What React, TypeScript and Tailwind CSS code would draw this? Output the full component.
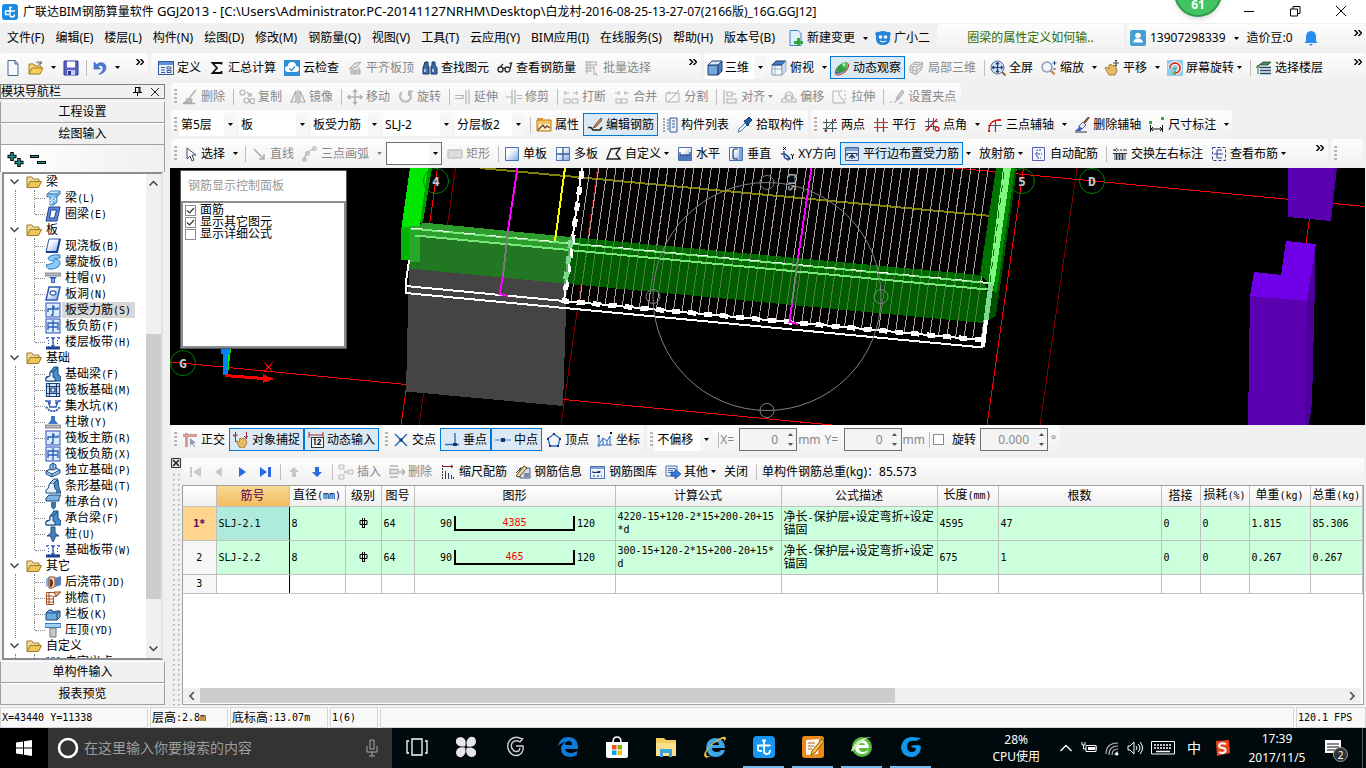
import { useState } from "react";
import type { ReactNode } from "react";
import clsx from "clsx";

// 16x16 icon bodies
const icons: Record<string, ReactNode> = {
  app: (
    <>
      <rect width="16" height="16" rx="3" fill="#1b8ae0" />
      <path d="M7 3.500h3M8 3.500v7.500q0 2 2 2 2.500 0 2.500-2.500M13 7H3.500v3.500H7" fill="none" stroke="#fff" strokeWidth="1.400" />
    </>
  ),
  newDoc: <path d="M3 .5h7l3 3.500v11.500h-10z M10 .5v3.500h3" fill="#f7fbff" stroke="#49648f" />,
  folderOpen: (
    <>
      <path d="M1 14V4h5l1 2h6v3" fill="#f4d77b" stroke="#a27a1f" />
      <path d="M1 14l3-6h11l-3 6z" fill="#f8cf58" stroke="#a27a1f" />
      <path d="M8 3q3-3 5 1m0-3v3h-3" fill="none" stroke="#555" />
    </>
  ),
  save: (
    <>
      <path d="M1 1h14v14H1z" fill="#5b66c4" stroke="#2f3b93" />
      <path d="M4 1.500h8v6H4z" fill="#fff" />
      <path d="M4 10h8v5H4z" fill="#c8cdee" />
      <path d="M5 11h3v4H5z" fill="#2f3b93" />
    </>
  ),
  undo: (
    <path d="M2 2v7h6.500L6 6.500c2-2 5-1 5 2 0 2.500-2 4-4 6 4-1 7-3.500 7-7 0-5-6-6-9.500-3z" fill="#4a7ddb" stroke="#2c57ad" strokeWidth=".6" />
  ),
  define: (
    <>
      <rect x=".5" y="1.500" width="15" height="13" fill="#e9f1fb" stroke="#33589b" />
      <path d="M1 2h14v3H1z" fill="#5f8fd4" />
      <path d="M3 7.500h4M3 10h4M3 12.500h4" stroke="#33589b" />
      <path d="M9 7h4v2H9zM9 10.500h4v2H9z" fill="#fff" stroke="#33589b" />
    </>
  ),
  sigma: <path d="M12.500 4.500V3h-9l4.500 5-4.500 5h9v-2" fill="none" stroke="#111" strokeWidth="1.800" />,
  cloud: (
    <>
      <rect width="16" height="16" fill="#2d8fd6" />
      <path d="M4 12a3 3 0 0 1 0-6 4 4 0 0 1 8 0 3 3 0 0 1 0 6z" fill="#fff" />
      <path d="M5.500 8.500l2 2 3.500-4" fill="none" stroke="#2d8fd6" strokeWidth="1.300" />
    </>
  ),
  slabTop: <path d="M2 9l6-6 6-1-4 5zM4 10h9v4H4zM4 12h9M8 10v4M12 7v4" fill="#ddd" stroke="#aaa" />,
  binoculars: (
    <>
      <path d="M3 2h3v3l1 2v7H1V8zM10 2h3v3l2 3v6H9V7l1-2z" fill="#3a6aa5" stroke="#173a68" />
      <path d="M3 9v3M11 9v3" stroke="#cfe2f8" strokeWidth="1.500" />
    </>
  ),
  glasses: (
    <path d="M1 9.500a2.500 2.500 0 1 0 5 0 2.500 2.500 0 1 0-5 0M8 9.500a2.500 2.500 0 1 0 5 0 2.500 2.500 0 1 0-5 0M6 9q1-1.500 2 0M13 9l1.500-6-2 .500M3 7l3-3" fill="none" stroke="#333" strokeWidth="1.400" />
  ),
  batch: <path d="M1 2h10M1 5h12M1 8h9M1 11h7M3 1v13M6 1v10M10 6v9l2-2 1 3M12 1v4" fill="none" stroke="#aaa" />,
  cube: (
    <>
      <path d="M1 5h10v10H1z" fill="#74a7dc" stroke="#1e3f6e" />
      <path d="M1 5l4-4h10l-4 4z" fill="#d5e7fa" stroke="#1e3f6e" />
      <path d="M11 5l4-4v10l-4 4z" fill="#4a7fbd" stroke="#1e3f6e" />
    </>
  ),
  topView: (
    <>
      <path d="M1 5h10v10H1z" fill="#f5f9ff" stroke="#7f93ad" />
      <path d="M1 5l4-4h10l-4 4z" fill="#3f7cc6" stroke="#1e3f6e" />
      <path d="M11 5l4-4v10l-4 4zM4 5v10M1 9h10" fill="#cbdcf0" stroke="#7f93ad" strokeWidth=".7" />
    </>
  ),
  orbit: (
    <>
      <ellipse cx="8" cy="9" rx="8" ry="4" transform="rotate(-40 8 9)" fill="none" stroke="#c03030" />
      <ellipse cx="8" cy="8" rx="6.500" ry="4" transform="rotate(-40 8 8)" fill="#2f9e3f" />
      <circle cx="11" cy="5" r="3" fill="#57bf62" />
      <circle cx="10" cy="4.500" r="1.300" fill="#c9f3cc" />
      <path d="M2 12q2 2 5 0" fill="none" stroke="#3a62a8" strokeWidth="1.500" />
    </>
  ),
  localCube: <path d="M1 6l5-4 8 1-2 7-5 5-6-3zM1 6l7 1 6-4M8 7l-1 8M4 4l7 1M4 6.500v7M1 9l7 2 5-5" fill="#e4e4e4" stroke="#aaa" />,
  fullScreen: (
    <>
      <path d="M11.500 11.500l4 4" stroke="#8a6a3a" strokeWidth="2" />
      <circle cx="7.500" cy="7.500" r="6.500" fill="#cfe0f4" stroke="#5c7196" />
      <path d="M7.500 2.500v10M2.500 7.500h10M6 4l1.500-1.500L9 4M6 11l1.500 1.500L9 11M4 6L2.500 7.500 4 9M11 6l1.500 1.500L11 9" fill="none" stroke="#1c3f78" strokeWidth="1.200" />
    </>
  ),
  zoom: (
    <>
      <path d="M9.500 10l4 4.500" stroke="#c79447" strokeWidth="2.500" />
      <circle cx="6" cy="7" r="5" fill="#eef4fb" stroke="#8c9bb2" strokeWidth="1.500" />
      <path d="M13.500 1v4M11.500 3h4M12 9h3" stroke="#24508f" />
    </>
  ),
  pan: (
    <>
      <path d="M1 8l2-1 2 2V5l2-1 1 2 2-1 2 2 1 4-2 4H5z" fill="#e7bb63" stroke="#9c6f22" strokeWidth=".8" />
      <path d="M12 0v6M9 3h6M11 1l1-1 1 1M11 5l1 1 1-1" fill="none" stroke="#333" strokeWidth=".9" />
    </>
  ),
  screenRotate: (
    <>
      <rect width="16" height="16" fill="#8ecbe8" />
      <path d="M3 8a5 5 0 1 1 5 5" fill="none" stroke="#fff" strokeWidth="4" />
      <path d="M3 8a5 5 0 1 1 5 5" fill="none" stroke="#d13a2f" strokeWidth="2" />
      <path d="M5 14l4-4v5zM5 8h5l-2 2z" fill="#62a845" />
    </>
  ),
  floors: (
    <>
      <path d="M3 5l4-3h8l-3 3z" fill="#4a8a62" stroke="#1d4b30" strokeWidth=".8" />
      <path d="M4 7.500h11M4 10.500h11M4 13.500h11" stroke="#26496f" strokeWidth="1.500" />
      <path d="M2 5v9M0 8l2-3 2 3" fill="none" stroke="#26702f" />
    </>
  ),
  brushGray: <path d="M14 1l-6 7M1 14q3 0 4-4l3-1 2 2-1 3zM1 14.500h12" fill="#bbb" stroke="#aaa" strokeWidth="1.300" />,
  copyGray: <path d="M1 3.500a2.500 2.500 0 1 0 5 0 2.500 2.500 0 1 0-5 0M5 11.500a2.500 2.500 0 1 0 5 0 2.500 2.500 0 1 0-5 0M11 12a2.500 2.500 0 1 0 5 0 2.500 2.500 0 1 0-5 0M8 3l4 4M12 4v3H9" fill="none" stroke="#b2b2b2" strokeWidth="1.200" />,
  mirrorGray: <path d="M6 2v11H1zM10 2v11h5zM8 1v14" fill="none" stroke="#a9a9a9" strokeWidth="1.200" />,
  moveGray: <path d="M8 1v14M1 8h14M6 3l2-2 2 2M6 13l2 2 2-2M3 6L1 8l2 2M13 6l2 2-2 2" fill="none" stroke="#b2b2b2" strokeWidth="1.600" />,
  rotateGray: <path d="M4 3a5.500 5.500 0 1 0 7 0M11 7V2.500h4" fill="none" stroke="#bcbcbc" strokeWidth="2.200" />,
  extendGray: <path d="M0 6.500h8v3H0M11 1v14M14 1v14" fill="none" stroke="#b2b2b2" strokeWidth="1.200" />,
  trimGray: <path d="M0 8h7M6 1v14M9 1v14M11 6.500h5M11 9.500h5" fill="none" stroke="#b2b2b2" strokeWidth="1.200" />,
  breakGray: <path d="M1 4h5M10 4h5M3 2L1 4l2 2M13 2l2 2-2 2M1 10h6v4H1zM9 10h6v4H9z" fill="none" stroke="#b2b2b2" />,
  mergeGray: <path d="M1 4h5M10 4h5M4 2l2 2-2 2M12 2l-2 2 2 2M2 10h5v4H2zM7 10h6v4H7z" fill="none" stroke="#b2b2b2" />,
  splitGray: <path d="M1 4h13v9H1zM3 13l9-9M14 1l-5 6M4 2v3" fill="none" stroke="#b2b2b2" />,
  alignGray: <path d="M2 1v14M5 3h5v4H5zM5 10h9v4H5zM11 5h3" fill="none" stroke="#b2b2b2" strokeWidth="1.200" />,
  offsetGray: <path d="M1 13q-1-3 3-4 0-6 4-6t4 6q4 1 3 4zM5 11q0-5 3-5t3 5z" fill="none" stroke="#b2b2b2" strokeWidth="1.200" />,
  stretchGray: (
    <>
      <path d="M1 2h6v4l6 8H1z" fill="none" stroke="#b2b2b2" />
      <path d="M8 2h5v12" fill="none" stroke="#b2b2b2" strokeDasharray="2 2" />
    </>
  ),
  gripGray: <path d="M1 13h2M5 13h2M13 1L8 8l2 2 5-7zM8 8l-1 4 3-2M10 14h4" fill="#ccc" stroke="#aaa" />,
  props: (
    <>
      <path d="M1 3h14v11H1z" fill="#f7c765" stroke="#b57a1b" />
      <path d="M1 1h6v3H1z" fill="#e1902f" />
      <path d="M3 7h11v6H3z" fill="#fdf3d8" />
      <path d="M2 13l5-5 2 3 2-2 3 2" fill="none" stroke="#6b4a1c" strokeWidth="1.400" />
    </>
  ),
  editBar: (
    <>
      <path d="M1 10.500h3l2 2.500h7l2-3" fill="none" stroke="#222" strokeWidth="1.600" />
      <path d="M14 1L8 8l-2 3 3-1 6-7z" fill="#c9875a" stroke="#5b3314" strokeWidth=".7" />
    </>
  ),
  compList: (
    <>
      <path d="M1 2h3M1 5h3M1 8h3M1 11h3M1 14h3M6 2v12" stroke="#3b5a92" strokeDasharray="2 1" />
      <path d="M8 1h7v14H8z" fill="#e9f1fb" stroke="#3b5a92" />
      <path d="M10 4h3M10 7h3M10 10h3" stroke="#3b5a92" />
    </>
  ),
  pick: (
    <>
      <path d="M1 15l1-3 6-6 2 2-6 6z" fill="#eaf2fb" stroke="#4d7fae" />
      <path d="M7 4l2-1 3-3 3 3-3 3-1 3z" fill="#1d5ea8" stroke="#12365f" />
    </>
  ),
  twoPoint: (
    <>
      <path d="M4.500 2v13M10.500 2v13M1 5.500h14M1 11.500h14" stroke="#4b5568" />
      <path d="M2 14L14 2" stroke="#2a8f3a" />
      <path d="M3 13h2v2H3zM12 2h2v2h-2z" fill="#c22" />
    </>
  ),
  parallel: (
    <>
      <path d="M4.500 1v14M10.500 1v14" stroke="#4b5568" strokeWidth="1.300" />
      <path d="M1 5.500h14M1 10.500h14" stroke="#b43c3c" />
    </>
  ),
  pointAngle: (
    <>
      <path d="M4.500 1v12M9.500 1v12M1 4.500h13M1 9.500h12" stroke="#4b5568" />
      <path d="M2 14L13 2" stroke="#d11c1c" strokeWidth="1.300" />
      <circle cx="13" cy="12" r="2" fill="none" stroke="#d11c1c" strokeWidth="1.300" />
    </>
  ),
  threeAxis: (
    <>
      <path d="M8.500 3v12M1 8.500h14" stroke="#4b5568" strokeWidth="1.200" />
      <path d="M2 14Q2 3 12 3" fill="none" stroke="#d11c1c" strokeWidth="1.300" />
      <path d="M11 2h3v2h-3zM1 13h2v2H1z" fill="#d11c1c" />
    </>
  ),
  delAxis: (
    <>
      <path d="M15 0l-5 6" stroke="#7b4a1d" strokeWidth="2" />
      <path d="M5 9l4-4 3 3-4 4z" fill="#e9e9f5" stroke="#5960a0" />
      <path d="M1 13q3 0 4-4l3 3q-1 3-6 2z" fill="#4060c0" />
      <path d="M1 15h12" stroke="#333" />
    </>
  ),
  dimension: (
    <>
      <path d="M1.500 8v7M13.500 8v7M2 12h11M4 10l-2 2 2 2M11 10l2 2-2 2" fill="none" stroke="#111" />
      <path d="M0 4h3v3H0zM12 0h3v3h-3z" fill="#3aa846" />
    </>
  ),
  cursor: <path d="M5 2v11l3-3 2 5 2-1-2-5h4z" fill="#fff" stroke="#3a4a66" />,
  lineGray: <path d="M3 3l9 9M13 8v5H8" fill="none" stroke="#aaa" strokeWidth="1.400" />,
  arcGray: <path d="M2 14Q3 5 12 3M1 12h3v3H1zM11 1h3v3h-3zM4 6h3v3H4z" fill="none" stroke="#aaa" />,
  rectGray: <path d="M1 4h14v8H1z" fill="#ddd" stroke="#b5b5b5" />,
  slab: <path d="M1.500 1.500h13v13h-13z" fill="url(#blueFade)" stroke="#4b71b0" />,
  slabs: (
    <>
      <path d="M1.500 1.500h13v13h-13z" fill="url(#blueFade)" stroke="#4b71b0" />
      <path d="M8 2v12M2 8h12" stroke="#3d5d94" strokeWidth="1.300" />
    </>
  ),
  custom: <path d="M5 3l9-1-4 6 4 5H1z" fill="none" stroke="#222" strokeWidth="1.400" />,
  horiz: (
    <>
      <path d="M1.500 1.500h13v13h-13z" fill="url(#blueFade)" stroke="#4b71b0" />
      <path d="M2 9h12v5H2z" fill="#4c78bb" />
      <path d="M3 6v3h10V6" fill="none" stroke="#1d3360" />
    </>
  ),
  vert: (
    <>
      <path d="M1.500 1.500h13v13h-13z" fill="url(#blueFade)" stroke="#4b71b0" />
      <path d="M10 3H7q-2 0-2 3v4q0 3 2 3h3" fill="none" stroke="#1d3360" strokeWidth="1.200" />
      <path d="M11 2h3v12h-3z" fill="#7fa2d6" />
    </>
  ),
  xy: (
    <>
      <path d="M5 5v4q0 4 4 4h2M2 8q5-1 7 3M9 10l2 3-3 1" fill="none" stroke="#2c4f93" strokeWidth="1.400" />
      <path d="M4 1l3 3M7 1L4 4M12 8l1.500 2L15 8M13.500 10v3" fill="none" stroke="#111" />
    </>
  ),
  edgeBar: (
    <>
      <path d="M1.500 1.500h13v13h-13z" fill="#d9e6f6" stroke="#3f5f97" />
      <path d="M2 2h12v3H2z" fill="#7f9fd0" />
      <path d="M3 10V7.500h10V10M8 8v5M5 12l3-3 3 3" fill="none" stroke="#1d3360" strokeWidth="1.200" />
    </>
  ),
  autoBar: (
    <>
      <path d="M1.500 1.500h12v13h-12z" fill="#f4f6ff" stroke="#5361b5" />
      <path d="M10 4H6v8h4M4 8h7" fill="none" stroke="#2b3f8f" strokeDasharray="2 1" />
    </>
  ),
  swap: (
    <>
      <path d="M2 5V2M2 4h12M14 5V2M5 2l-2 2 2 2" fill="none" stroke="#333" strokeDasharray="2 1" />
      <path d="M2 8h12v6H2z" fill="#9aa5b5" />
      <path d="M4.500 8v6M7.500 8v6M10.500 8v6M1 7.500h14" stroke="#2c3440" />
    </>
  ),
  viewBar: (
    <>
      <path d="M1.500 1.500h13v13h-13z" fill="none" stroke="#2b3f8f" strokeDasharray="3 2" />
      <path d="M11 4H6v8h5M3 8h9" fill="none" stroke="#2b3f8f" />
    </>
  ),
  ortho: (
    <>
      <path d="M1 3.500h14M4.500 1v14" stroke="#d99a9a" strokeWidth="3" />
      <path d="M8 6l6 5-3 .500 2 3-1 .500-2-3-2 2z" fill="#8d9db5" />
    </>
  ),
  snap: (
    <>
      <path d="M2.500 0v10M13.500 0v7M0 3h5M2 5l-2-2M11 4l2 2 2-2" fill="none" stroke="#a12a2a" />
      <path d="M3 9l3 1 1-4 2 1 2-1 2 2 1 3-3 5H7z" fill="#e7bb63" stroke="#9c6f22" strokeWidth=".8" />
    </>
  ),
  dynInput: (
    <>
      <path d="M1 0v6M15 0v6M1 3h14" stroke="#a12a2a" />
      <rect x="3.500" y="5.500" width="12" height="10" fill="#f3f3f3" stroke="#333" />
      <path d="M6 8l1-1v6M9.500 8.500q2.500-2 3 0 0 1-3 4h3.500" fill="none" stroke="#111" strokeWidth="1.200" />
    </>
  ),
  cross: (
    <>
      <path d="M2 2l12 12M14 2L2 14" stroke="#2a6fc0" strokeWidth="1.500" />
      <path d="M6.500 6.500h3v3h-3z" fill="#17366d" />
    </>
  ),
  perp: (
    <>
      <path d="M1 12.500h14M11 1v12" stroke="#2a6fc0" strokeWidth="1.400" />
      <path d="M9 11h4v3H9z" fill="#17366d" />
    </>
  ),
  mid: (
    <>
      <path d="M0 8h16" stroke="#6fa8dd" strokeWidth="1.500" />
      <path d="M6 6h4v4H6z" fill="#17366d" />
    </>
  ),
  vertex: (
    <>
      <path d="M8 2l6 4.500-2 7.500H4L2 6.500z" fill="none" stroke="#2a6fc0" strokeWidth="1.300" />
      <path d="M7 1h2v2H7zM1 6h2v2H1zM13 6h2v2h-2zM3 13h2v2H3zM11 13h2v2h-2z" fill="#17366d" />
    </>
  ),
  coord: (
    <>
      <path d="M2 3v12M0 13h15M3 11l3-5 4 3 3-5v9M6 6v7M10 9v4" fill="none" stroke="#2a6fc0" />
      <path d="M13 0l2 2M15 0l-2 2M0 4h3" stroke="#111" />
    </>
  ),
  insertGray: <path d="M1 1h5v4H1zM1 11h5v4H1zM10 6h5v4h-5zM6 8h4M8 6L6 8l2 2" fill="#eee" stroke="#bdbdbd" />,
  deleteGray: <path d="M1 2h8M1 5.500h8v4H1zM1 13h8M10 8h6M13 5l3 3-3 3" fill="#e6e6e6" stroke="#b2b2b2" strokeWidth="1.300" />,
  scaleBar: (
    <>
      <path d="M2.500 1v14" stroke="#333" strokeDasharray="2 1" />
      <path d="M2 2.500h11M11 1l2 1.500L11 4" fill="none" stroke="#8a1c1c" />
      <path d="M5.500 7v8M8.500 9v6M11.500 11v4M13.500 13v2" stroke="#2b3f6f" />
    </>
  ),
  barInfo: (
    <>
      <path d="M5 4h10v10H5z" fill="#cfe0f5" stroke="#3b5a92" />
      <path d="M1 12l8-10 3 2-8 9z" fill="#f0d79b" stroke="#5b4520" />
      <path d="M1 9l5-5M9 10h5M9 12h5" stroke="#333" />
    </>
  ),
  barLib: (
    <>
      <rect x=".5" y="2.500" width="14" height="12" fill="#eaf3fd" stroke="#4b71b0" />
      <path d="M1 3h13v2H1z" fill="#7ba3dc" />
      <path d="M3 9V7M3 8.500h7V7M3 12h2M7 12h2M11 12h1" stroke="#17366d" />
    </>
  ),
  other: (
    <>
      <path d="M1 2h11v10H1z" fill="#eaf3fd" stroke="#4b71b0" />
      <path d="M3 4.500h7M3 6.500h5M3 8.500h4" stroke="#4b71b0" />
      <path d="M6 8h4V5l6 5-6 5v-3H6z" fill="#3b76db" stroke="#1d4697" strokeWidth=".7" />
    </>
  ),
  change: (
    <>
      <path d="M2 .5h8l3 3v12H2z" fill="#e2effb" stroke="#3c86c6" />
      <path d="M9 8h3v3h3v3h-3v2H9v-2H6v-3h3z" fill="#35a53e" />
    </>
  ),
  mascot: (
    <>
      <path d="M0 4q1-3 4-2 4-2 8 0 3-1 4 2-1 1-1 2v4q-1 5-7 5t-7-5V6q0-1-1-2z" fill="#2687d9" />
      <circle cx="5.500" cy="7" r="1.800" fill="#fff" />
      <circle cx="10.500" cy="7" r="1.800" fill="#fff" />
      <path d="M5 11q3 2 6 0" fill="none" stroke="#fff" />
    </>
  ),
  user: (
    <>
      <rect width="16" height="16" rx="2" fill="#459fd3" />
      <circle cx="8" cy="5.500" r="2.800" fill="#fff" />
      <path d="M3 12.500q1-4 5-4t5 4z" fill="#fff" />
    </>
  ),
  bell: <path d="M8 1q5 0 5 6v4l1.500 2h-13L3 11V7q0-6 5-6zM6 14h4l-2 2z" fill="#2b8cf0" />,
  first: <path d="M2 3h2v10H2zM13 3v10L5 8z" fill="#c9c9c9" />,
  prev: <path d="M11 3v10L4 8z" fill="#c9c9c9" />,
  next: <path d="M5 3v10l7-5z" fill="#2d6be0" />,
  last: <path d="M3 3v10l7-5zM11 3h3v10h-3z" fill="#2d6be0" />,
  up: <path d="M8 3l5 5h-3v5H6V8H3z" fill="#c9c9c9" />,
  down: <path d="M8 13l5-5h-3V3H6v5H3z" fill="#2d6be0" />,
  // tree
  folder: (
    <>
      <path d="M1 13V3h5l1 2h6v3" fill="#f3dc97" stroke="#9a7a31" />
      <path d="M1 13.500l3-6h11.500l-3 6z" fill="#edc455" stroke="#9a7a31" />
    </>
  ),
  beam: (
    <>
      <path d="M2 4l4-3h9l-3 3z" fill="#d2ebfb" stroke="#3e86c0" />
      <path d="M2 4h10v3H9v8H5V7H2zM12 4l3-3v3l-3 3v5l-3 3" fill="#8cc3ea" stroke="#3e86c0" />
      <path d="M5 11l4-4M5 14l4-4" stroke="#fff" />
    </>
  ),
  ring: <path d="M4 1h11l-3 14H1zM6 4h5.500l-2 8H4.500z" fillRule="evenodd" fill="#5b8ad8" stroke="#1d3f91" />,
  cast: (
    <>
      <path d="M4 1h11l-3 13H1z" fill="url(#blueFade)" stroke="#2c5bb5" />
      <path d="M1 14h11l3-13" fill="none" stroke="#173f91" strokeWidth="2" />
    </>
  ),
  spiral: <path d="M15 1q-10-1-12 3 0 3 6 3 1 2-8 4 1 5 6 4 8-1 8-6 0-4-6-4 0-1 6-1z" fill="#8cc9f5" stroke="#2c7cc5" />,
  cap: (
    <>
      <path d="M0 3h16v3H0z" fill="#b8bcc2" stroke="#666" strokeWidth=".7" />
      <path d="M4 7h8l-2 2v4H6V9z" fill="#2d63c0" />
      <path d="M7.500 9h1v3h-1z" fill="#fff" />
    </>
  ),
  hole: (
    <>
      <path d="M4 1h11l-3 13H1z" fill="url(#blueFade)" stroke="#2c5bb5" strokeWidth="1.500" />
      <ellipse cx="8" cy="7" rx="3" ry="2.200" fill="#fff" stroke="#2c5bb5" strokeWidth="1.200" />
    </>
  ),
  mainBar: (
    <>
      <rect x="1" y="1" width="14" height="14" fill="#dceaff" stroke="#2c4fb5" />
      <path d="M8 3v10h-2M3 10V7h10V5M10 5H7" fill="none" stroke="#2c5bb5" strokeWidth="1.300" />
    </>
  ),
  negBar: (
    <>
      <rect x="1" y="1" width="14" height="14" fill="#dceaff" stroke="#2c4fb5" />
      <path d="M8 2v12M3 8V5h10v3M3 12V9h10v3" fill="none" stroke="#2c5bb5" strokeWidth="1.300" />
    </>
  ),
  strip: (
    <>
      <path d="M1 14h14" stroke="#1d3f91" strokeWidth="3" />
      <path d="M1 4h2M13 4h2M6 4h4M8 4v9M6 12h4" stroke="#2c5bb5" strokeWidth="1.400" />
      <path d="M3.500 3v10M12.500 3v10" stroke="#2c5bb5" strokeDasharray="1 2" />
    </>
  ),
  footBeam: (
    <>
      <path d="M1 15v-4l4-1V6l4-5h4v7l3 3v4z" fill="#4a8ac6" stroke="#174a80" />
      <path d="M1 15v-3l4-2V6h3v5l2 1v3z" fill="#e6f1fc" stroke="#174a80" />
      <path d="M8 6l5-5" stroke="#174a80" />
    </>
  ),
  raft: <path d="M1.500 1.500h13v13h-13zM4.500 1v14M11.500 1v14M1 4.500h14M1 11.500h14M6 6h4v4H6z" fill="#dceaff" stroke="#173f7a" strokeWidth="1.200" />,
  pit: (
    <>
      <path d="M0 3h3l2 6h6l2-6h3M5 2v4M11 2v4" fill="none" stroke="#2c5bb5" strokeWidth="1.400" />
      <path d="M1 9l4 4h6l4-4" fill="none" stroke="#2c5bb5" strokeDasharray="2 1" strokeWidth="2" />
    </>
  ),
  pier: (
    <>
      <path d="M6 2h4v4l3 4H3l3-4z" fill="#3d74c8" />
      <path d="M0 11h16v3H0z" fill="#b8bcc2" stroke="#666" strokeWidth=".7" />
    </>
  ),
  footing: (
    <path d="M1 9l4-2V3l3-2 3 2v3l4 2v3l-8 4-6-3zM1 9l6 3 8-4M7 12v3M5 7l3 1 3-2M8 1v7" fill="#9ec9ec" stroke="#174a80" />
  ),
  stripFoot: (
    <>
      <path d="M9 2h4l1 8 2 5h-5L7 5z" fill="#4a8ac6" stroke="#174a80" />
      <path d="M1 15v-3q3-1 3-5l1-2h4q0 6 3 8v2z" fill="#e6f1fc" stroke="#174a80" />
      <path d="M5 5l4-4h4L9 5" fill="#9ec9ec" stroke="#174a80" />
    </>
  ),
  pileCap: (
    <>
      <path d="M1 4l3-3h12l-2 3v3H1z" fill="#7fb2e0" stroke="#174a80" />
      <path d="M6 8h5v5l-2.500 3L6 13z" fill="#3d74a8" />
    </>
  ),
  pile: <path d="M6 1h4v6l4 3h-4v2l-2 4-2-4v-2H2l4-3z" fill="#4a7fb0" stroke="#1d4f80" />,
  postCast: (
    <>
      <path d="M1 5l3-2v9l-3 1z" fill="#8fb0dd" />
      <path d="M4 3h6v9l-2 2H4z" fill="#e8ded4" stroke="#8a4b22" />
      <path d="M5 5q3 0 3 4t-3 4z" fill="#6b3414" />
      <path d="M10 4l6-2v9l-6 2z" fill="#5c7fb8" />
    </>
  ),
  eave: (
    <>
      <path d="M1.500 2.500h13l-3 4h-3v8h-7z" fill="#fff" stroke="#a54b22" />
      <path d="M1 6h7M1 9h7M1 12h7M4 3v12" stroke="#a54b22" />
      <path d="M9 2h7l-5 4z" fill="#d8c2a8" stroke="#a54b22" />
    </>
  ),
  rail: <path d="M1 7l3-3h3l1 2 3-1h4v6l-3 3H1zM1 7h11v7M12 7l3-2" fill="#6fa9d8" stroke="#174a80" />,
  coping: (
    <>
      <path d="M0 1.500h16v4H0z" fill="#9fd0f5" stroke="#2c7cc5" />
      <path d="M5 6h6v9H5z" fill="#c9c9c9" stroke="#777" />
    </>
  ),
};

function Icon({ name, className }: { name: string; className?: string }) {
  return (
    <svg viewBox="0 0 16 16" className={clsx("h-4 w-4 shrink-0", className)} aria-hidden="true">
      {icons[name]}
    </svg>
  );
}

function Caret({ className = "fill-black" }: { className?: string }) {
  return (
    <svg viewBox="0 0 5 3" className={clsx("h-[3px] w-[5px] shrink-0", className)} aria-hidden="true">
      <path d="M0 0h5L2.500 3z" />
    </svg>
  );
}

// Bitmap-style mixed text: CJK at 12px, half-width characters 6px wide
function Mono({ children }: { children: string }) {
  return (
    <>
      {children.split(/([\x20-\x7e]+)/).map((part, i) =>
        i % 2 ? (
          <span key={i} className="font-['DejaVu_Sans_Mono',monospace] text-[10px] whitespace-pre-wrap">
            {part}
          </span>
        ) : (
          part
        )
      )}
    </>
  );
}

type ToolProps = {
  icon?: string;
  label: string;
  active?: boolean;
  disabled?: boolean;
  drop?: "split" | "inline";
};

function Tool({ icon, label, active = false, disabled, drop }: ToolProps) {
  return (
    <>
      <button
        disabled={disabled}
        className={clsx(
          "flex h-[23px] shrink-0 items-center gap-[3px] border px-[3px] whitespace-nowrap",
          active ? "border-[#0078d7] bg-[#dbe9f5]" : "border-transparent",
          disabled ? "text-[#888]" : "text-black"
        )}
      >
        {icon && <Icon name={icon} />}
        <span>{label}</span>
        {drop === "inline" && <Caret className={disabled ? "fill-[#888]" : "fill-black"} />}
      </button>
      {drop === "split" && (
        <button aria-label={label + "选项"} disabled={disabled} className="flex h-[23px] w-3 shrink-0 items-center justify-center">
          <Caret className={disabled ? "fill-[#888]" : "fill-black"} />
        </button>
      )}
    </>
  );
}

function IconTool({ icon, label }: { icon: string; label: string }) {
  return (
    <button aria-label={label} className="flex h-[23px] w-[23px] shrink-0 items-center justify-center">
      <Icon name={icon} />
    </button>
  );
}

const Sep = () => <div className="mr-px ml-1 h-4 w-px shrink-0 bg-[#bdbdbd]" />;

const Grip = () => (
  <div className="mr-px h-4 w-[3px] shrink-0 bg-[linear-gradient(#b5b5b5_50%,transparent_50%)] bg-[length:3px_4px]" />
);

function Group({ grip, className, children }: { grip?: boolean; className?: string; children: ReactNode }) {
  return (
    <div
      className={clsx(
        "flex h-full shrink-0 items-center rounded-sm bg-linear-to-b from-[#fdfdfd] to-[#f0f0f0] pl-[3px]",
        className
      )}
    >
      {grip && <Grip />}
      {children}
    </div>
  );
}

function More() {
  return (
    <button aria-label="更多" className="flex w-4 shrink-0 justify-center self-start pt-[6px]">
      <svg viewBox="0 0 8 6" className="h-[6px] w-2" aria-hidden="true">
        <path d="M.5 0l3 3-3 3M4.500 0l3 3-3 3" fill="none" stroke="#000" strokeWidth="1.500" />
      </svg>
    </button>
  );
}

function Combo({ label, value, className }: { label: string; value: string; className: string }) {
  return (
    <div className={clsx("relative flex h-[23px] shrink-0 items-center bg-white", className)}>
      <select aria-label={label} className="h-full w-full appearance-none bg-transparent pl-[2px] outline-none">
        <option>{value}</option>
      </select>
      <span className="pointer-events-none absolute inset-y-0 right-0 flex w-3 items-center justify-center bg-[#f6f6f6]">
        <Caret />
      </span>
    </div>
  );
}

function Spin({ label, value, className }: { label: string; value: string; className: string }) {
  return (
    <div className={clsx("flex h-[23px] shrink-0 items-center border border-[#707070] bg-[#f4f4f4]", className)}>
      <input aria-label={label} defaultValue={value} className="w-full min-w-0 bg-transparent pr-[6px] text-right text-[#888] outline-none" />
      <div className="flex h-full w-3 shrink-0 flex-col items-center justify-between py-1">
        <button aria-label={label + "增加"} className="flex rotate-180">
          <Caret className="fill-[#555]" />
        </button>
        <button aria-label={label + "减少"} className="flex">
          <Caret className="fill-[#555]" />
        </button>
      </div>
    </div>
  );
}

const menus = [
  "文件(F)", "编辑(E)", "楼层(L)", "构件(N)", "绘图(D)", "修改(M)", "钢筋量(Q)", "视图(V)",
  "工具(T)", "云应用(Y)", "BIM应用(I)", "在线服务(S)", "帮助(H)", "版本号(B)",
];

const tree = [
  { name: "梁", items: [["beam", "梁(L)"], ["ring", "圈梁(E)"]] },
  {
    name: "板",
    items: [
      ["cast", "现浇板(B)"], ["spiral", "螺旋板(B)"], ["cap", "柱帽(V)"], ["hole", "板洞(N)"],
      ["mainBar", "板受力筋(S)"], ["negBar", "板负筋(F)"], ["strip", "楼层板带(H)"],
    ],
  },
  {
    name: "基础",
    items: [
      ["footBeam", "基础梁(F)"], ["raft", "筏板基础(M)"], ["pit", "集水坑(K)"], ["pier", "柱墩(Y)"],
      ["mainBar", "筏板主筋(R)"], ["negBar", "筏板负筋(X)"], ["footing", "独立基础(P)"],
      ["stripFoot", "条形基础(T)"], ["pileCap", "桩承台(V)"], ["footBeam", "承台梁(F)"],
      ["pile", "桩(U)"], ["strip", "基础板带(W)"],
    ],
  },
  {
    name: "其它",
    items: [["postCast", "后浇带(JD)"], ["eave", "挑檐(T)"], ["rail", "栏板(K)"], ["coping", "压顶(YD)"]],
  },
  { name: "自定义", items: [["strip", "自定义点"]] },
];

function TitleBar() {
  return (
    <header className="relative flex h-[23px] shrink-0 items-center bg-white pl-[2px] text-black">
      <Icon name="app" />
      <h1 className="ml-[5px] flex-1 truncate">
        广联达BIM钢筋算量软件{" "}
        <span className="text-[13px]">GGJ2013 - [C:\Users\Administrator.PC-20141127NRHM\Desktop\</span>
        白龙村-2016-08-25-13-27-07(2166版)_16G.GGJ12]
      </h1>
      <div className="absolute -top-[31px] right-36 flex h-12 w-12 items-end justify-center rounded-full border-2 border-[#2f9a4c] bg-linear-to-b from-[#4cbf5c] to-[#41c463] pb-1 leading-3 font-bold text-white shadow-md">
        61
      </div>
      {[
        ["最小化", "M0 5.500h10"],
        ["还原", "M.5 3h7v7h-7zM3 3V.5h7v7H7.500"],
        ["关闭窗口", "M0 0l10 10M10 0L0 10"],
      ].map(([label, d]) => (
        <button key={label} aria-label={label} className="flex w-[46px] items-center justify-center">
          <svg viewBox="0 0 11 11" className="h-[11px] w-[11px]" aria-hidden="true">
            <path d={d} fill="none" stroke="#000" />
          </svg>
        </button>
      ))}
      <div className="w-[2px]" />
    </header>
  );
}

function MenuBar() {
  return (
    <div className="flex h-[30px] shrink-0 items-center py-px pl-[2px]">
      <nav className="flex shrink-0 items-center gap-px">
        {menus.map((m) => (
          <button key={m} className="px-[5px] whitespace-nowrap">
            {m}
          </button>
        ))}
      </nav>
      <div className="ml-1 flex shrink-0">
        <Tool icon="change" label="新建变更" drop="split" />
        <Tool icon="mascot" label="广小二" />
      </div>
      <Group className="ml-[3px] flex-1 justify-center pr-[3px]">
        <a href="#tip" className="truncate text-[#2e6b00]">
          圈梁的属性定义如何输..
        </a>
      </Group>
      <Group className="ml-[3px] w-[239px]">
        <button className="flex items-center gap-1">
          <Icon name="user" />
          13907298339
        </button>
        <button aria-label="账户选项" className="flex h-5 w-[21px] items-center justify-center">
          <Caret />
        </button>
        <span className="whitespace-nowrap">造价豆:0</span>
        <button aria-label="通知" className="ml-[10px]">
          <Icon name="bell" />
        </button>
        <div className="flex-1" />
        <More />
      </Group>
    </div>
  );
}

function MainToolbar() {
  return (
    <div className="flex h-[29px] shrink-0 gap-[3px]">
      <Group className="w-[148px] pl-px!">
        <IconTool icon="newDoc" label="新建" />
        <IconTool icon="folderOpen" label="打开" />
        <button aria-label="打开选项" className="flex h-5 w-3 items-center justify-center">
          <Caret />
        </button>
        <IconTool icon="save" label="保存" />
        <Sep />
        <IconTool icon="undo" label="撤销" />
        <button aria-label="撤销选项" className="flex h-5 w-3 items-center justify-center">
          <Caret />
        </button>
        <div className="flex-1" />
        <More />
      </Group>
      <Group className="min-w-[550px]">
        <Tool icon="define" label="定义" />
        <Tool icon="sigma" label="汇总计算" />
        <Tool icon="cloud" label="云检查" />
        <Tool icon="slabTop" label="平齐板顶" disabled />
        <Tool icon="binoculars" label="查找图元" />
        <Tool icon="glasses" label="查看钢筋量" />
        <Tool icon="batch" label="批量选择" disabled />
        <div className="flex-1" />
        <More />
      </Group>
      <Group className="flex-1 pl-px!">
        <div className="mr-px flex h-[23px] items-center bg-white pl-[2px]">
          <Icon name="cube" />
          <Combo label="视图模式" value="三维" className="w-[43px]" />
        </div>
        <Tool icon="topView" label="俯视" drop="split" />
        <Tool icon="orbit" label="动态观察" active />
        <Tool icon="localCube" label="局部三维" disabled />
        <Sep />
        <Tool icon="fullScreen" label="全屏" />
        <Tool icon="zoom" label="缩放" drop="split" />
        <Tool icon="pan" label="平移" drop="split" />
        <Tool icon="screenRotate" label="屏幕旋转" drop="inline" />
        <Sep />
        <Tool icon="floors" label="选择楼层" />
        <div className="flex-1" />
        <More />
      </Group>
    </div>
  );
}

function EditToolbars() {
  return (
    <>
      <div className="flex h-7 shrink-0 gap-[3px] pt-px">
        <Group grip className="pr-px">
          <Tool icon="brushGray" label="删除" disabled />
          <Sep />
          <Tool icon="copyGray" label="复制" disabled />
          <Tool icon="mirrorGray" label="镜像" disabled />
          <Sep />
          <Tool icon="moveGray" label="移动" disabled />
          <Tool icon="rotateGray" label="旋转" disabled />
          <Sep />
          <Tool icon="extendGray" label="延伸" disabled />
          <Tool icon="trimGray" label="修剪" disabled />
          <Sep />
          <Tool icon="breakGray" label="打断" disabled />
          <Tool icon="mergeGray" label="合并" disabled />
          <Tool icon="splitGray" label="分割" disabled />
          <Sep />
          <Tool icon="alignGray" label="对齐" disabled drop="inline" />
          <Tool icon="offsetGray" label="偏移" disabled />
          <Tool icon="stretchGray" label="拉伸" disabled />
          <Sep />
          <Tool icon="gripGray" label="设置夹点" disabled />
        </Group>
      </div>
      <div className="flex h-[29px] shrink-0 gap-[3px]">
        <Group grip>
          <div className="flex gap-[3px] pr-[2px] pl-px">
            <Combo label="楼层" value="第5层" className="w-[57px]" />
            <Combo label="构件类型" value="板" className="w-[69px]" />
            <Combo label="构件种类" value="板受力筋" className="w-[69px]" />
            <Combo label="构件名称" value="SLJ-2" className="w-[69px]" />
            <Combo label="分层" value="分层板2" className="w-[69px]" />
          </div>
          <Sep />
          <Tool icon="props" label="属性" />
          <Tool icon="editBar" label="编辑钢筋" active />
          <Tool icon="compList" label="构件列表" />
          <Tool icon="pick" label="拾取构件" />
        </Group>
        <Group grip>
          <Tool icon="twoPoint" label="两点" />
          <Tool icon="parallel" label="平行" />
          <Tool icon="pointAngle" label="点角" drop="split" />
          <Tool icon="threeAxis" label="三点辅轴" drop="split" />
          <Tool icon="delAxis" label="删除辅轴" />
          <Tool icon="dimension" label="尺寸标注" drop="split" />
        </Group>
      </div>
      <div className="flex h-[29px] shrink-0 gap-[3px] overflow-hidden">
        <Group grip className="min-w-[1157px]">
          <Tool icon="cursor" label="选择" drop="split" />
          <Sep />
          <Tool icon="lineGray" label="直线" disabled />
          <Tool icon="arcGray" label="三点画弧" disabled drop="split" />
          <Combo label="画弧参数" value="" className="mx-px w-14 border border-[#707070]" />
          <Tool icon="rectGray" label="矩形" disabled />
          <Sep />
          <Tool icon="slab" label="单板" />
          <Tool icon="slabs" label="多板" />
          <Tool icon="custom" label="自定义" drop="inline" />
          <Tool icon="horiz" label="水平" />
          <Tool icon="vert" label="垂直" />
          <Tool icon="xy" label="XY方向" />
          <Tool icon="edgeBar" label="平行边布置受力筋" active drop="split" />
          <Tool label="放射筋" drop="inline" />
          <Tool icon="autoBar" label="自动配筋" />
          <Sep />
          <Tool icon="swap" label="交换左右标注" />
          <Tool icon="viewBar" label="查看布筋" drop="inline" />
          <div className="flex-1" />
          <More />
        </Group>
        <Group grip className="w-8">
          <span />
        </Group>
      </div>
    </>
  );
}

function Expander() {
  return (
    <svg viewBox="0 0 9 6" className="h-[6px] w-[9px] shrink-0" aria-hidden="true">
      <path d="M.5 .5l4 4 4-4" fill="none" stroke="#444" strokeWidth="1.500" />
    </svg>
  );
}

function Sidebar() {
  const [selected, setSelected] = useState("板受力筋(S)");
  const tab = "flex h-[22px] shrink-0 w-full items-center justify-center border border-[#a0a0a0] border-t-white bg-[#f0f0f0]";

  return (
    <aside className="flex w-[165px] shrink-0 flex-col pt-[2px] text-black">
      <div className="flex h-[15px] shrink-0 items-center border border-[#808080]">
        <span className="flex-1">模块导航栏</span>
        <button aria-label="固定" className="flex w-[18px] justify-center">
          <svg viewBox="0 0 9 9" className="h-[9px] w-[9px]" aria-hidden="true">
            <path d="M2.500 0v5M6 0v5M2 .5h5M7 0v5M0 5.500h9M4.500 5v4" fill="none" stroke="#000" />
          </svg>
        </button>
        <button aria-label="关闭导航栏" className="flex w-[18px] justify-center">
          <svg viewBox="0 0 8 8" className="h-2 w-2" aria-hidden="true">
            <path d="M0 0l8 8M8 0L0 8" stroke="#222" />
          </svg>
        </button>
      </div>
      <div className="h-[2px] shrink-0" />
      <button className={tab}>工程设置</button>
      <button className={tab}>绘图输入</button>
      <div className="flex h-[27px] shrink-0 items-center gap-[5px] border-x border-[#a0a0a0] bg-linear-to-r from-white to-[#f0f0f0] pl-[6px]">
        <button aria-label="全部展开">
          <svg viewBox="0 0 18 16" className="h-4 w-[18px]" aria-hidden="true">
            <path d="M5 1v9M.5 5.500h9M12 7v9M7.500 11.500h9" stroke="#000" strokeWidth="3.500" />
            <path d="M5 2v7M1.500 5.500h7M12 8v7M8.500 11.500h7" stroke="#0fa3a3" strokeWidth="1.500" />
          </svg>
        </button>
        <button aria-label="全部折叠">
          <svg viewBox="0 0 18 16" className="h-4 w-[18px]" aria-hidden="true">
            <path d="M0 5.500h9M7 11.500h9" stroke="#000" strokeWidth="3" />
            <path d="M1 5.500h7M8 11.500h7" stroke="#0fa3a3" />
          </svg>
        </button>
      </div>
      <div className="mx-[2px] flex min-h-0 flex-1 border-2 border-[#8a8d92] border-r-[#e3e3e3] border-b-[#8a8d92] bg-white">
        <ul className="min-w-0 flex-1 overflow-hidden">
          {tree.map((group) => (
            <li key={group.name}>
              <div className="flex h-4 items-center pl-[6px]">
                <Expander />
                <span className="w-[7px]" />
                <Icon name="folder" />
                <span className="ml-1">{group.name}</span>
              </div>
              <ul className="ml-[11px] border-l border-dotted border-[#888]">
                {group.items.map(([icon, label], i) => (
                  <li key={label} className="flex h-4 items-center pl-[18px]">
                    <span
                      className={clsx(
                        "self-start border-l border-dotted border-[#888]",
                        i === group.items.length - 1 ? "h-2" : "h-4"
                      )}
                    />
                    <span className="w-[10px] border-t border-dotted border-[#888]" />
                    <Icon name={icon} />
                    <button
                      onClick={() => setSelected(label)}
                      className={clsx(
                        "ml-px flex h-4 items-center pr-1 pl-[3px] whitespace-nowrap",
                        selected === label && "bg-[#d8d8d8]"
                      )}
                    >
                      <span>
                        <Mono>{label}</Mono>
                      </span>
                    </button>
                  </li>
                ))}
              </ul>
            </li>
          ))}
        </ul>
        <div className="flex w-[15px] shrink-0 flex-col items-center justify-between bg-[#f0f0f0] py-[6px]">
          <span className="rotate-180">
            <Expander />
          </span>
          <div className="mt-[100px] h-[265px] w-full bg-[#cdcdcd]" />
          <Expander />
        </div>
      </div>
      <div className="h-px shrink-0" />
      <button className={tab}>单构件输入</button>
      <button className={tab}>报表预览</button>
      <div className="h-px shrink-0" />
    </aside>
  );
}

function AxisMark({ x, y, name }: { x: number; y: number; name: string }) {
  return (
    <g>
      <circle cx={x} cy={y} r="12.5" fill="none" stroke="#008000" />
      <text x={x} y={y + 5} textAnchor="middle" fill="#c8c8c8" className="font-['DejaVu_Sans_Mono',monospace] text-[13px] font-bold">
        {name}
      </text>
    </g>
  );
}

function Model() {
  const bars = Array.from({ length: 52 }, (_, i) => 590 + i * 8.66);

  return (
    <svg
      viewBox="170 168 1195 257"
      preserveAspectRatio="xMinYMin slice"
      className="absolute inset-0 h-full w-full"
      role="img"
      aria-label="三维模型"
    >
      <clipPath id="slabArea">
        <path d="M582 168H1000L982 340 564 301z" />
      </clipPath>
      <g shapeRendering="crispEdges">
        {/* grid axes */}
        <path d="M455.500 168L419 425M597.500 168L561 425M1077 168L1040 425" stroke="#800000" />
        <path d="M437.500 168L401 425M1023.500 168L987 425M170 362L832 425M955 168L1365 206.500" stroke="#f00" />
        <path d="M480 168L997 216.500" stroke="#808000" strokeWidth="2" />

        {/* foundation block and beam body */}
        <path d="M409 264L406 391.500 563 406 567 280z" fill="#444" />
        <path d="M423 222.500L570 237 564 283.500 409 268.500 410 228z" fill="#227822" />
        <path d="M423 222.500L570 237 568 250.500 415 236z" fill="#2d9e2d" />
        <path d="M570 237L980 275 996 316 983 323 564 283.500z" fill="#005a00" />
        <path d="M570 237L980 275 988 290 568 250.500z" fill="#007400" />

        {/* distribution bars */}
        <g clipPath="url(#slabArea)" stroke="#b0a09c">
          {bars.map((x) => (
            <path key={x} d={`M${x} 168L${x - 26} 350`} />
          ))}
        </g>
        <path d="M570 237L980 275 983 323 564 283.500z" fill="#006000" opacity=".55" />

        {/* end columns */}
        <path d="M410 168h18l-8 56-1 4-17.500-1z" fill="#00e800" />
        <path d="M428 168h4l-9 54-3 1z" fill="#009c00" />
        <path d="M401 227h9v33h-9z" fill="#00b400" />
        <path d="M409 226h11v36h-11z" fill="#28a828" />
        <path d="M996 168h7l-14 115-9-8z" fill="#007400" />
        <path d="M1013 168h4l-21 148h-9z" fill="#005000" />
        <path d="M1010 168h5l-18 124h-4z" fill="#008c00" />
        <path d="M1003 168h8l-17 118h-6z" fill="#80f880" />
        <path d="M1004 172L990 282" stroke="#007400" strokeDasharray="7 6" />

        <path d="M411 228.500L988 283M415 235.500L988 289.500" stroke="#78e878" strokeWidth="2" fill="none" />
        <path d="M411 228L988 282.500" stroke="#fff" strokeDasharray="12 14" />

        {/* selected slab outline */}
        <path d="M409 260L405.500 286V293L983 347.500M405.500 286L564 301 982 340" fill="none" stroke="#fff" strokeWidth="2" />
        <path d="M582 168L564 301" stroke="#fff" strokeWidth="2" />
        <path d="M582 171L564 301L982 340" fill="none" stroke="#fff" strokeWidth="5" strokeDasharray="8 8" />
        <path d="M571 236L565 284" stroke="#4fae5c" strokeWidth="2" />
        <path d="M571 240L565 284" stroke="#80d890" strokeWidth="5" strokeDasharray="8 8" />
        <path d="M991 284L986 320" stroke="#80d890" strokeWidth="5" />
        <path d="M986 320L983 347" stroke="#fff" strokeWidth="4" />

        <path d="M565 168L555 241" stroke="#ff0" strokeWidth="2" />
        <path d="M517.500 168L508 230M503 276L499.500 294 508 296M811.500 168L798 258M792 303L789.500 322 798 324" fill="none" stroke="#f0f" strokeWidth="2" />
        <path d="M508 230L503 276M798 258L792 303" stroke="#7a7a7a" strokeWidth="2" />

        {/* walls */}
        <path d="M1309.500 219L1306 243" stroke="#f00" />
        <path d="M1288 168h49l-6 53-43-4z" fill="#5a00b0" />
        <path d="M1334 168h3l-6 53-1-1z" fill="#4c009c" />
        <path d="M1286 241l30 3-9 57-57-5 4-24 27 3z" fill="#7000e8" />
        <path d="M1250 296l57 5-2 124h-57z" fill="#5a00b0" />
        <path d="M1315.500 244l-8.500 57-2 124h4l3-22 3-120z" fill="#4c009c" />

        {/* axis gizmo */}
        <path d="M230 349L227 374" stroke="#0e0" strokeWidth="2" />
        <path d="M221 348h9v6h-2v21h-5v-21h-2z" fill="#0080ff" />
        <path d="M225 374l38 3v-3l11 5-11 4v-3l-38-3z" fill="#f00" />
        <path d="M264 362l9 10M273 362l-9 10" stroke="#f00" />
      </g>

      <AxisMark x={436} y={181} name="4" />
      <AxisMark x={1022} y={181} name="5" />
      <AxisMark x={1092} y={181} name="D" />
      <AxisMark x={183} y={363} name="G" />

      {/* orbit ring */}
      <g fill="none" stroke="#808080">
        <circle cx="767" cy="296.5" r="114" />
        <circle cx="767" cy="182.500" r="7" />
        <circle cx="767" cy="410.500" r="7" />
        <circle cx="653" cy="296.500" r="7" />
        <circle cx="881" cy="296.500" r="7" />
      </g>
      <text x="796" y="191" transform="rotate(-90 796 191)" fill="#aaa" className="font-['DejaVu_Sans_Mono',monospace] text-[10px] font-bold">
        SLJ
      </text>
    </svg>
  );
}

function CheckRow({ label, checked }: { label: string; checked?: boolean }) {
  return (
    <label className="flex h-3 items-center gap-1 leading-3">
      <span className="relative h-[11px] w-[11px]">
        <input type="checkbox" defaultChecked={checked} className="peer block h-[11px] w-[11px] appearance-none border border-[#8a8a8a] bg-white" />
        <svg viewBox="0 0 11 11" className="pointer-events-none absolute inset-0 hidden peer-checked:block" aria-hidden="true">
          <path d="M2 5.500l2.500 2.500L9 3" fill="none" stroke="#333" strokeWidth="1.200" />
        </svg>
      </span>
      {label}
    </label>
  );
}

function Viewport() {
  return (
    <section className="relative mr-px h-[257px] shrink-0 overflow-hidden bg-black">
      <Model />
      <div className="absolute top-[2px] left-[10px] flex h-[179px] w-[167px] flex-col border border-[#555] bg-white">
        <div className="flex h-[30px] items-center pl-[7px] text-[#999]">钢筋显示控制面板</div>
        <div className="flex-1 border-2 border-[#8a8d92] px-[2px] pt-px">
          <CheckRow label="面筋" checked />
          <CheckRow label="显示其它图元" checked />
          <CheckRow label="显示详细公式" />
        </div>
      </div>
    </section>
  );
}

function SnapBar() {
  return (
    <div className="flex h-[29px] shrink-0 gap-[3px]">
      <Group grip>
        <Tool icon="ortho" label="正交" />
        <Tool icon="snap" label="对象捕捉" active />
        <Tool icon="dynInput" label="动态输入" active />
      </Group>
      <Group grip>
        <Tool icon="cross" label="交点" />
        <Tool icon="perp" label="垂点" active />
        <Tool icon="mid" label="中点" active />
        <Tool icon="vertex" label="顶点" />
        <Tool icon="coord" label="坐标" />
      </Group>
      <Group grip className="pr-1">
        <div className="flex pr-[2px] pl-px">
          <Combo label="偏移方式" value="不偏移" className="w-[57px]" />
        </div>
        <Sep />
        <div className="flex items-center gap-px text-[#888]">
          <span className="w-[18px]">X=</span>
          <Spin label="X偏移" value="0" className="w-[58px]" />
          mm
        </div>
        <div className="ml-1 flex items-center gap-px text-[#888]">
          <span className="w-[18px]">Y=</span>
          <Spin label="Y偏移" value="0" className="w-[58px]" />
          mm
        </div>
        <Sep />
        <label className="mr-1 ml-[2px] flex items-center gap-2">
          <input type="checkbox" className="h-[11px] w-[11px] appearance-none border border-[#8a8a8a] bg-white" />
          旋转
        </label>
        <Spin label="旋转角度" value="0.000" className="w-[68px]" />
        <span className="ml-[3px] text-[#888]">°</span>
      </Group>
    </div>
  );
}

const columns: [string, string][] = [
  ["筋号", "w-[73px]"],
  ["直径(mm)", "w-[56px]"],
  ["级别", "w-[36px]"],
  ["图号", "w-[33px]"],
  ["图形", "w-[201px]"],
  ["计算公式", "w-[166px]"],
  ["公式描述", "w-[156px]"],
  ["长度(mm)", "w-[61px]"],
  ["根数", "w-[163px]"],
  ["搭接", "w-[39px]"],
  ["损耗(%)", "w-[49px]"],
  ["单重(kg)", "w-[61px]"],
  ["总重(kg)", ""],
];

const rebars = [
  { no: "1*", name: "SLJ-2.1", span: "4385", formula: "4220-15+120-2*15+200-20+15*d", length: "4595", count: "47", unit: "1.815", total: "85.306" },
  { no: "2", name: "SLJ-2.2", span: "465", formula: "300-15+120-2*15+200-20+15*d", length: "675", count: "1", unit: "0.267", total: "0.267" },
];

function GradeMark() {
  return (
    <svg viewBox="0 0 9 10" className="mx-auto h-[10px] w-[9px]" role="img" aria-label="HRB400">
      <path d="M1 2.500h7v4H1zM3.500 0v9M5.500 0v9M3 9.500h3" fill="none" stroke="#000" />
    </svg>
  );
}

function RebarTable() {
  return (
    <table className="w-full table-fixed border-collapse leading-3">
      <thead>
        <tr className="h-5 bg-linear-to-b from-white to-[#efefef]">
          <th className="w-[33px] border-r border-b border-[#c0c0c0]" />
          {columns.map(([name, width], i) => (
            <th
              key={name}
              className={clsx(
                "overflow-hidden border-r border-b border-[#c0c0c0] p-0 font-normal whitespace-nowrap",
                width,
                i === 0 && "bg-linear-to-b from-[#f8d793] to-[#f2bd5e] text-[#5a0050]"
              )}
            >
              <Mono>{name}</Mono>
            </th>
          ))}
        </tr>
      </thead>
      <tbody>
        {rebars.map((r, i) => (
          <tr key={r.no} className="h-[34px] bg-[#ccffdb] [&>td]:border-r [&>td]:border-b [&>td]:border-[#c0c0c0] [&>td]:px-[2px] [&>td]:py-0">
            <th
              className={clsx(
                "border-r border-b border-[#c0c0c0] p-0",
                i === 0 ? "bg-[#ffd48c] text-[#5a0050]" : "bg-[#f6f6f6] font-normal"
              )}
            >
              <Mono>{r.no}</Mono>
            </th>
            <td className={clsx("border-r-black!", i === 0 && "bg-[#aeebdb]")}>
              <Mono>{r.name}</Mono>
            </td>
            <td><Mono>8</Mono></td>
            <td><GradeMark /></td>
            <td><Mono>64</Mono></td>
            <td>
              <div className="flex items-center justify-center gap-[2px]">
                <span className="w-5 text-right"><Mono>90</Mono></span>
                <span className="flex h-[15px] w-[121px] items-center justify-center border-2 border-t-0 border-black text-[#f00]">
                  <span><Mono>{r.span}</Mono></span>
                </span>
                <span className="w-5"><Mono>120</Mono></span>
              </div>
            </td>
            <td className="pr-1! break-all"><Mono>{r.formula}</Mono></td>
            <td className="break-all"><Mono>净长-保护层+设定弯折+设定锚固</Mono></td>
            <td><Mono>{r.length}</Mono></td>
            <td><Mono>{r.count}</Mono></td>
            <td><Mono>0</Mono></td>
            <td><Mono>0</Mono></td>
            <td><Mono>{r.unit}</Mono></td>
            <td><Mono>{r.total}</Mono></td>
          </tr>
        ))}
        <tr className="h-[19px] [&>td]:border-r [&>td]:border-b [&>td]:border-[#c0c0c0]">
          <th className="border-r border-b border-[#c0c0c0] bg-[#f6f6f6] p-0 font-normal">
            <Mono>3</Mono>
          </th>
          {columns.map(([name], i) => (
            <td key={name} className={clsx(i === 0 && "border-r-black!")} />
          ))}
        </tr>
      </tbody>
    </table>
  );
}

function Dock() {
  return (
    <section className="flex min-h-0 flex-1 pt-1">
      <div className="flex w-3 shrink-0 flex-col items-center pr-px">
        <button aria-label="关闭面板" className="mb-1">
          <svg viewBox="0 0 10 10" className="h-[10px] w-[10px]" aria-hidden="true">
            <path d="M.5 .5h9v9h-9z" fill="#e8e0e0" stroke="#333" />
            <path d="M2 2l6 6M8 2L2 8" stroke="#222" strokeWidth="1.500" />
          </svg>
        </button>
        <div className="w-[10px] flex-1 bg-[radial-gradient(#b8b8b8_1px,transparent_1px)] bg-[length:5px_5px]" />
      </div>
      <div className="mr-[2px] mb-px flex min-w-0 flex-1 flex-col">
        <div className="flex h-[27px] shrink-0 items-center bg-linear-to-b from-[#fdfdfd] to-[#f0f0f0] pl-[2px]">
          <IconTool icon="first" label="首条" />
          <IconTool icon="prev" label="上一条" />
          <IconTool icon="next" label="下一条" />
          <IconTool icon="last" label="末条" />
          <Sep />
          <IconTool icon="up" label="上移" />
          <IconTool icon="down" label="下移" />
          <Sep />
          <Tool icon="insertGray" label="插入" disabled />
          <Tool icon="deleteGray" label="删除" disabled />
          <Tool icon="scaleBar" label="缩尺配筋" />
          <Tool icon="barInfo" label="钢筋信息" />
          <Tool icon="barLib" label="钢筋图库" />
          <Tool icon="other" label="其他" drop="inline" />
          <Tool label="关闭" />
          <Sep />
          <span className="ml-1 whitespace-nowrap">单构件钢筋总重(kg)：85.573</span>
        </div>
        <div className="flex min-h-0 flex-1 flex-col justify-between border border-[#a0a0a0] bg-white">
          <RebarTable />
          <div className="mr-[2px] mb-px flex h-[15px] items-center bg-[#f0f0f0]">
            <span className="flex w-[17px] rotate-90 justify-center">
              <Expander />
            </span>
            <div className="h-full w-[59%] bg-[#cdcdcd]" />
            <div className="flex-1" />
            <span className="flex w-[17px] -rotate-90 justify-center">
              <Expander />
            </span>
          </div>
        </div>
      </div>
    </section>
  );
}

function StatusBar() {
  const cell = "flex items-center border border-[#d5d5d5] pl-px whitespace-pre";
  return (
    <footer className="flex h-[22px] shrink-0 gap-[2px] bg-[#f8f8f8] pt-px text-black">
      <div className={clsx(cell, "w-[148px]")}><Mono>X=43440 Y=11338</Mono></div>
      <div className={clsx(cell, "w-[78px]")}><Mono>层高:2.8m</Mono></div>
      <div className={clsx(cell, "w-[98px]")}><Mono>底标高:13.07m</Mono></div>
      <div className={clsx(cell, "w-12")}><Mono>1(6)</Mono></div>
      <div className={clsx(cell, "flex-1")} />
      <div className={clsx(cell, "w-[70px]")}><Mono>120.1 FPS</Mono></div>
    </footer>
  );
}

type Task = { name: string; open?: boolean; art: ReactNode };

const pinned: Task[] = [
  {
    name: "任务视图",
    art: <path d="M7 4h10v16H7zM4 6H2v12h2M20 6h2v12h-2" fill="none" stroke="#fff" strokeWidth="1.300" />,
  },
  {
    name: "风车",
    art: (
      <path d="M11.500 11Q5 13 2 8q-1-6 5-6 6 1 4.500 9zM13 11.500Q11 5 16 2q6-1 6 5-1 6-9 4.500zM12.500 13Q19 11 22 16q1 6-5 6-6-1-4.500-9zM11 12.500Q13 19 8 22q-6 1-6-5 1-6 9-4.500z" fill="#e6e6e6" />
    ),
  },
  {
    name: "加速球",
    art: (
      <path d="M19 4q-7-4-12 1-4 5-1 11 4 6 10 4 5-3 4-9h-7M17 7q-5-3-8 1-2 5 2 8 5 2 6-3M20 3l-3 4" fill="none" stroke="#d0d0d0" strokeWidth="1.400" />
    ),
  },
];

const apps: Task[] = [
  {
    name: "Edge",
    art: (
      <path d="M2 11Q4 2 12 2q9 0 10 9v3H9q1 4 6 4 3 0 6-2v4q-3 2-7 2-9-1-9-8 0-5 5-7-4 0-8 4zM9 10h7q0-4-3-4-4 0-4 4z" fill="#0f7ad8" />
    ),
  },
  {
    name: "应用商店",
    art: (
      <>
        <path d="M8 7q0-5 4-5t4 5" fill="none" stroke="#fff" strokeWidth="1.500" />
        <path d="M1 7h22v14q0 2-2 2H3q-2 0-2-2z" fill="#fff" />
        <path d="M7 10h4.500v4.500H7z" fill="#f04e23" />
        <path d="M12.500 10H17v4.500h-4.500z" fill="#7cb900" />
        <path d="M7 15.500h4.500V20H7z" fill="#00a3ee" />
        <path d="M12.500 15.500H17V20h-4.500z" fill="#feb800" />
      </>
    ),
  },
  {
    name: "文件资源管理器",
    art: (
      <>
        <path d="M2 3h8l2 2h10v16H2z" fill="#f3cc5c" />
        <path d="M2 8h20v13H2z" fill="#fce08c" />
        <path d="M6 14h12v8h-3v-4H9v4H6z" fill="#37a3e0" />
      </>
    ),
  },
  {
    name: "IE",
    art: (
      <>
        <path d="M3 12q1-9 10-9 8 0 9 10H9q0 4 5 4 3 0 4-2h4q-2 7-9 7-9 0-10-10zm6-2h7q0-3-3-3-4 0-4 3z" fill="#3ea5e6" />
        <path d="M2 22Q-2 18 11 7 22-1 23 3q0 2-2 4 2-5-5-2Q0 15 4 21q2 1 5-1-5 4-7 2z" fill="#f0c23c" />
      </>
    ),
  },
  {
    name: "广联达",
    open: true,
    art: (
      <>
        <rect x="1" y="1" width="22" height="22" rx="4" fill="#1596f0" />
        <path d="M10 5.500h4M12 5.500v10.500q0 3 3 3 3 0 3-4M18.500 10.500H6V15q0 1 4 1" fill="none" stroke="#fff" strokeWidth="1.800" />
      </>
    ),
  },
  {
    name: "便签",
    open: true,
    art: (
      <>
        <rect x="1" y="1" width="22" height="22" rx="3" fill="#e98a1c" />
        <path d="M5 5l13-1-1 15-12 1z" fill="#fff8ea" />
        <path d="M7 8h7M7 11h6M7 14h4" stroke="#a66a2a" />
        <path d="M21 4L11 16l-1 4 4-2L23 6z" fill="#f8c13a" stroke="#8a5312" />
      </>
    ),
  },
  {
    name: "浏览器",
    open: true,
    art: (
      <>
        <circle cx="12" cy="12" r="10" fill="#5abb3e" />
        <path d="M5 12q1-7 7-7t7 8H9q0 4 4 4 3 0 5-2-1 4-6 4-7 0-7-7zm4-2h6q0-2-3-2t-3 2z" fill="#fff" />
        <path d="M1 16Q6 2 22 2q-10 2-15 9t-6 5z" fill="#c9ecb8" />
      </>
    ),
  },
  {
    name: "GGJ",
    open: true,
    art: (
      <path d="M22 3q-3 3-6 3-7-1-8 5 0 6 5 6 4 0 4-4-4 0-5-2 6-2 10 0 0 9-8 11-9 1-12-8Q2 4 11 2q5 0 11 1z" fill="#1296ea" />
    ),
  },
];

function TaskButtons({ items }: { items: Task[] }) {
  return (
    <div className="flex">
      {items.map((t) => (
        <button
          key={t.name}
          aria-label={t.name}
          className={clsx(
            "mx-1 flex w-[41px] items-center justify-center border-b-2",
            t.open ? "border-[#76b9ed]" : "border-transparent"
          )}
        >
          <svg viewBox="0 0 24 24" className="h-6 w-6" aria-hidden="true">
            {t.art}
          </svg>
        </button>
      ))}
    </div>
  );
}

function Taskbar() {
  return (
    <div className="flex h-10 shrink-0 bg-[#00090b] text-white">
      <button aria-label="开始" className="flex w-12 items-center justify-center bg-black">
        <svg viewBox="0 0 16 16" className="h-4 w-4" aria-hidden="true">
          <path d="M0 2.500l7-1v6H0zM8 1.300L16 0v7.500H8zM0 8.500h7v6l-7-1zM8 8.500h8V16l-8-1.300z" fill="#fff" />
        </svg>
      </button>
      <div className="flex w-[344px] items-center bg-[#333] pr-3 pl-[9px]">
        <svg viewBox="0 0 22 22" className="h-[22px] w-[22px]" aria-hidden="true">
          <circle cx="11" cy="11" r="9" fill="none" stroke="#fff" strokeWidth="2.600" />
        </svg>
        <input
          aria-label="搜索"
          placeholder="在这里输入你要搜索的内容"
          className="ml-[5px] min-w-0 flex-1 bg-transparent text-[14px] outline-none placeholder:text-[#9d9d9d]"
        />
        <svg viewBox="0 0 16 20" className="h-5 w-4" aria-hidden="true">
          <path d="M6 2h4v9H6zM3 8v6h10V8M8 14v4M5 18h6" fill="none" stroke="#aaa" />
        </svg>
      </div>
      <div className="flex gap-1">
        <TaskButtons items={pinned} />
        <TaskButtons items={apps} />
      </div>
      <div className="flex-1" />
      <div className="flex flex-col justify-center text-center leading-[17px]">
        <span>28%</span>
        <span>CPU使用</span>
      </div>
      <div className="ml-[18px] flex items-center gap-[7px]">
        <svg viewBox="0 0 16 16" className="h-4 w-4" aria-hidden="true">
          <path d="M2.500 11L8 5.500l5.500 5.500" fill="none" stroke="#fff" strokeWidth="1.300" />
        </svg>
        <svg viewBox="0 0 16 16" className="h-4 w-4" aria-hidden="true">
          <path d="M5 5.500h10v6H5zM15 7h1v3M1 2v3h3V2M2.500 5v4H5" fill="none" stroke="#fff" />
          <path d="M7 7h7v3H7z" fill="#fff" />
        </svg>
        <svg viewBox="0 0 16 16" className="h-4 w-4" aria-hidden="true">
          <path d="M2 14Q2 3 14 3M5 15Q5 6 14 6M8 15q0-6 6-6M11 15q0-3 3-3" fill="none" stroke="#bbb" strokeWidth="1.200" />
          <circle cx="13" cy="14" r="1.500" fill="#fff" />
        </svg>
        <svg viewBox="0 0 16 16" className="h-4 w-4" aria-hidden="true">
          <path d="M1 6h2l4-4v12l-4-4H1zM9 6q2 2 0 4M11 4q4 4 0 8M13 2q5 6 0 12" fill="none" stroke="#fff" />
        </svg>
        <svg viewBox="0 0 24 14" className="ml-px h-[14px] w-6" aria-hidden="true">
          <path d="M.5 .5h23v12.500H.5z" fill="none" stroke="#fff" />
          <path d="M3 4h18M3 7h18" stroke="#fff" strokeDasharray="2 1" strokeWidth="1.500" />
          <path d="M5 10.500h14" stroke="#fff" strokeWidth="1.500" />
        </svg>
        <button className="w-6 text-[14px]">中</button>
        <svg viewBox="0 0 18 18" className="h-[18px] w-[18px]" aria-hidden="true">
          <path d="M3 2l13-1 1 13-13 3z" fill="#e8441e" />
          <path d="M13 5Q6 3 6 7q1 2 4 2 4 1 2 4-3 2-6 0" fill="none" stroke="#fff" strokeWidth="2" />
        </svg>
      </div>
      <div className="ml-[14px] flex w-[64px] flex-col justify-center text-center leading-[19px]">
        <span>17:39</span>
        <span>2017/11/5</span>
      </div>
      <button aria-label="操作中心" className="relative ml-4 flex w-[37px] items-center">
        <svg viewBox="0 0 16 16" className="h-4 w-4" aria-hidden="true">
          <path d="M0 0h16v13h-5l-3 3v-3H0z" fill="#fff" />
          <path d="M2 4h12M2 7h12M2 10h8" stroke="#111" />
        </svg>
        <span className="absolute bottom-[6px] left-2 flex h-[15px] w-[15px] items-center justify-center rounded-full border border-[#999] bg-[#333] text-[10px]">
          2
        </span>
      </button>
      <div className="mr-[3px] w-px bg-[#555]" />
    </div>
  );
}

export default function App() {
  return (
    <div className="flex h-screen flex-col overflow-hidden bg-[#f0f0f0] font-['Noto_Sans','Noto_Sans_CJK_SC',sans-serif] text-[12px] leading-4 text-black">
      <svg className="absolute h-0 w-0" aria-hidden="true">
        <linearGradient id="blueFade" x1="0" y1="0" x2="1" y2="1">
          <stop offset="0.3" stopColor="#fff" />
          <stop offset="1" stopColor="#7fa8e6" />
        </linearGradient>
      </svg>
      <TitleBar />
      <MenuBar />
      <MainToolbar />
      <div className="flex min-h-0 flex-1">
        <Sidebar />
        <main className="ml-[5px] flex min-w-0 flex-1 flex-col">
          <div className="flex flex-col pl-px">
            <EditToolbars />
          </div>
          <Viewport />
          <div className="pl-px">
            <SnapBar />
          </div>
          <Dock />
        </main>
      </div>
      <StatusBar />
      <Taskbar />
    </div>
  );
}
